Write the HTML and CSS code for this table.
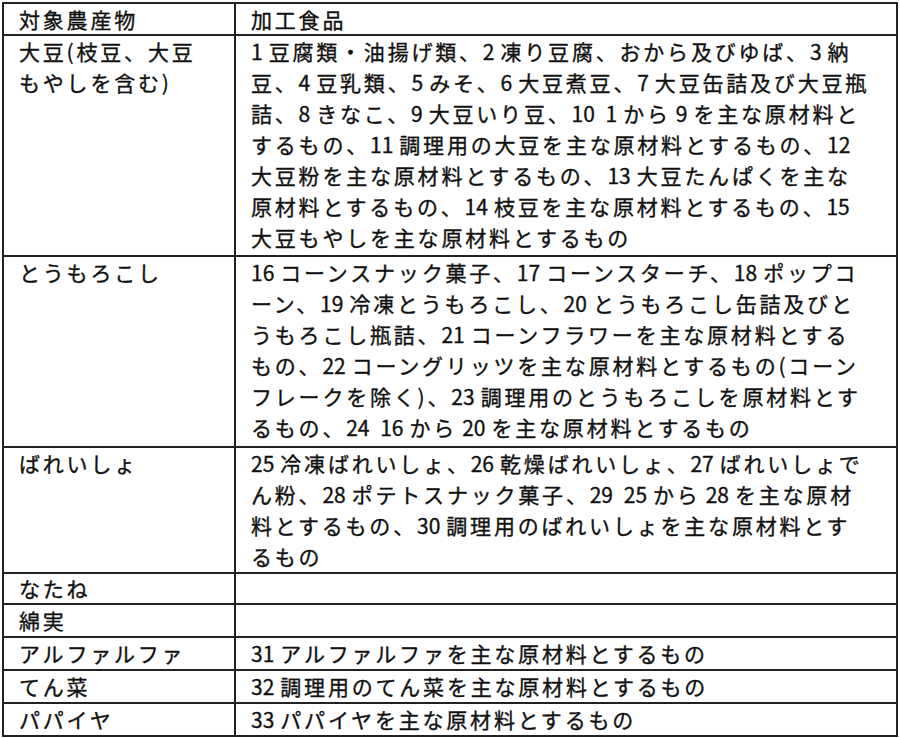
FILE: index.html
```html
<!DOCTYPE html>
<html lang="ja">
<head>
<meta charset="utf-8">
<title>対象農産物と加工食品</title>
<link rel="stylesheet" href="styles.css">
</head>
<body>
<table class="tbl">
  <tr class="head">
    <td class="c1">対象農産物</td>
    <td class="c2">加工食品</td>
  </tr>
  <tr class="soy">
    <td class="c1">大豆(枝豆、大豆<br>もやしを含む)</td>
    <td class="c2"><span class="n">1</span>豆腐類・油揚げ類、<span class="n">2</span>凍り豆腐、おから及びゆば、<span class="n">3</span>納<br>豆、<span class="n">4</span>豆乳類、<span class="n">5</span>みそ、<span class="n">6</span>大豆煮豆、<span class="n">7</span>大豆缶詰及び大豆瓶<br>詰、<span class="n">8</span>きなこ、<span class="n">9</span>大豆いり豆、<span class="n">10 1</span>から<span class="n l">9</span>を主な原材料と<br>するもの、<span class="n">11</span>調理用の大豆を主な原材料とするもの、<span class="n">12</span><br>大豆粉を主な原材料とするもの、<span class="n">13</span>大豆たんぱくを主な<br>原材料とするもの、<span class="n">14</span>枝豆を主な原材料とするもの、<span class="n">15</span><br>大豆もやしを主な原材料とするもの</td>
  </tr>
  <tr class="corn">
    <td class="c1">とうもろこし</td>
    <td class="c2"><span class="n">16</span>コーンスナック菓子、<span class="n">17</span>コーンスターチ、<span class="n">18</span>ポップコ<br>ーン、<span class="n">19</span>冷凍とうもろこし、<span class="n">20</span>とうもろこし缶詰及びと<br>うもろこし瓶詰、<span class="n">21</span>コーンフラワーを主な原材料とする<br>もの、<span class="n">22</span>コーングリッツを主な原材料とするもの(コーン<br>フレークを除く)、<span class="n">23</span>調理用のとうもろこしを原材料とす<br>るもの、<span class="n">24 16</span>から<span class="n l">20</span>を主な原材料とするもの</td>
  </tr>
  <tr>
    <td class="c1">ばれいしょ</td>
    <td class="c2"><span class="n">25</span>冷凍ばれいしょ、<span class="n">26</span>乾燥ばれいしょ、<span class="n">27</span>ばれいしょで<br>ん粉、<span class="n">28</span>ポテトスナック菓子、<span class="n">29 25</span>から<span class="n l">28</span>を主な原材<br>料とするもの、<span class="n">30</span>調理用のばれいしょを主な原材料とす<br>るもの</td>
  </tr>
  <tr class="short">
    <td class="c1">なたね</td>
    <td class="c2"></td>
  </tr>
  <tr>
    <td class="c1">綿実</td>
    <td class="c2"></td>
  </tr>
  <tr>
    <td class="c1">アルファルファ</td>
    <td class="c2"><span class="n">31</span>アルファルファを主な原材料とするもの</td>
  </tr>
  <tr>
    <td class="c1">てん菜</td>
    <td class="c2"><span class="n">32</span>調理用のてん菜を主な原材料とするもの</td>
  </tr>
  <tr class="last">
    <td class="c1">パパイヤ</td>
    <td class="c2"><span class="n">33</span>パパイヤを主な原材料とするもの</td>
  </tr>
</table>
</body>
</html>
```
FILE: styles.css
```css
html, body {
  margin: 0;
  padding: 0;
  background: #ffffff;
}

body {
  font-family: "Noto Sans CJK JP", "Noto Sans", sans-serif;
  font-size: 21px;
  color: #111111;
}

.tbl {
  border-collapse: separate;
  border-spacing: 0;
  border: 2px solid #222222;
  margin: 2px 0 0 2px;
  width: 896px;
  box-sizing: border-box;
  table-layout: fixed;
}

.tbl td {
  box-sizing: border-box;
  padding: 0 0 0 15px;
  line-height: 31px;
  vertical-align: top;
  white-space: nowrap;
  letter-spacing: 2.8px;
  border-bottom: 2px solid #222222;
  -webkit-text-stroke: 0.35px #111111;
}

.tbl tr.head td {
  line-height: 30px;
}

.tbl tr.soy td {
  padding-bottom: 2px;
}

.tbl tr.corn td {
  padding-bottom: 3px;
}

.tbl tr.short td {
  line-height: 29px;
}

.tbl tr.last td {
  border-bottom: none;
}

.tbl td.c1 {
  width: 232px;
  border-right: 2px solid #222222;
}

.n {
  letter-spacing: 0;
  word-spacing: 6px;
  margin-right: 6px;
}

.n.l {
  margin-left: 5px;
}
```
